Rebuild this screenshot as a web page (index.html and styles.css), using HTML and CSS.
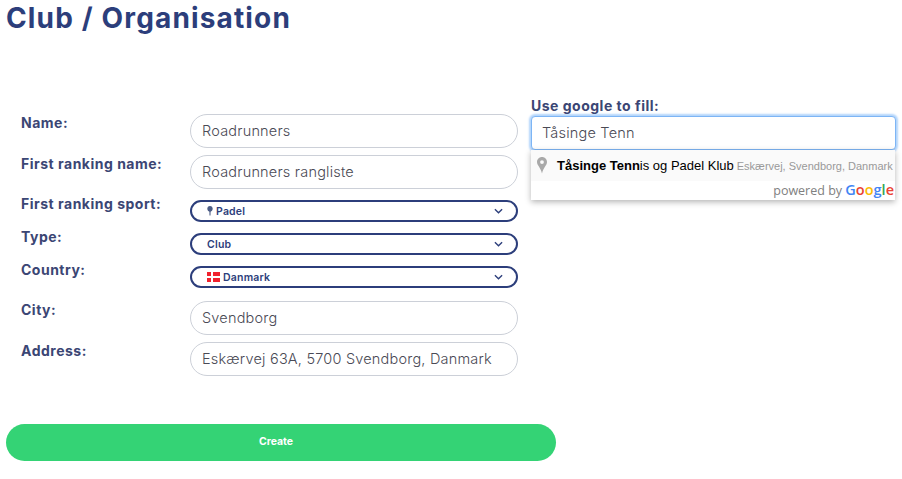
FILE: index.html
```html
<!DOCTYPE html>
<html>
<head>
    <meta charset="utf-8">
    <title>Club / Organisation</title>
    <link rel="stylesheet" href="styles.css">
</head>
<body>
    <h1 class="page-title">Club / Organisation</h1>

    <div class="form-area">
        <div class="fields">
            <div class="field-row">
                <label class="field-label">Name:</label>
                <input class="text-input" type="text" value="Roadrunners">
            </div>
            <div class="field-row first-gap">
                <label class="field-label">First ranking name:</label>
                <input class="text-input" type="text" value="Roadrunners rangliste">
            </div>
            <div class="field-row select-row">
                <label class="field-label">First ranking sport:</label>
                <div class="select-box">
                    <svg class="racket" width="6" height="10" viewBox="0 0 6 10"><path d="M3 0C1.300 0 .3 1.200 .3 2.700 .3 4.200 1.400 5.300 2.400 5.800L2.500 9.500H3.500L3.600 5.800C4.600 5.300 5.700 4.200 5.700 2.700 5.700 1.200 4.700 0 3 0Z" fill="#4b5c85"/></svg>
                    <span>Padel</span>
                    <svg class="chevron" width="9" height="6" viewBox="0 0 10 6"><path d="M1 1L5 5L9 1" fill="none" stroke="#2c3e7b" stroke-width="1.500"/></svg>
                </div>
            </div>
            <div class="field-row select-row">
                <label class="field-label">Type:</label>
                <div class="select-box">
                    <span>Club</span>
                    <svg class="chevron" width="9" height="6" viewBox="0 0 10 6"><path d="M1 1L5 5L9 1" fill="none" stroke="#2c3e7b" stroke-width="1.500"/></svg>
                </div>
            </div>
            <div class="field-row select-row last-select">
                <label class="field-label">Country:</label>
                <div class="select-box">
                    <svg class="flag" width="13" height="10" viewBox="0 0 13 10"><rect width="13" height="10" fill="#f0222e"/><rect x="4" width="2" height="10" fill="#fff"/><rect y="4" width="13" height="2" fill="#fff"/></svg>
                    <span>Danmark</span>
                    <svg class="chevron" width="9" height="6" viewBox="0 0 10 6"><path d="M1 1L5 5L9 1" fill="none" stroke="#2c3e7b" stroke-width="1.500"/></svg>
                </div>
            </div>
            <div class="field-row">
                <label class="field-label">City:</label>
                <input class="text-input" type="text" value="Svendborg">
            </div>
            <div class="field-row">
                <label class="field-label">Address:</label>
                <input class="text-input" type="text" value="Eskærvej 63A, 5700 Svendborg, Danmark">
            </div>
        </div>

        <div class="google-fill">
            <div class="google-label">Use google to fill:</div>
            <input class="google-input" type="text" value="Tåsinge Tenn">
            <div class="suggestions">
                <div class="suggestion">
                    <svg class="pin" width="10" height="17" viewBox="0 0 10 17"><path fill-rule="evenodd" d="M5 0C2.200 0 0 2.200 0 5C0 8.500 3.800 10.500 5 16.500C6.200 10.500 10 8.500 10 5C10 2.200 7.800 0 5 0ZM5 3.200A1.900 1.900 0 1 1 5 7A1.900 1.900 0 0 1 5 3.200Z" fill="#a9a9a9"/></svg>
                    <span class="match">Tåsinge Tenn</span><span class="rest">is og Padel Klub</span>
                    <span class="place">Eskærvej, Svendborg, Danmark</span>
                </div>
                <div class="powered">powered by <span class="google-word"><span class="g-blue">G</span><span class="g-red">o</span><span class="g-yellow">o</span><span class="g-blue">g</span><span class="g-green">l</span><span class="g-red">e</span></span></div>
            </div>
        </div>
    </div>

    <button class="create-btn">Create</button>
</body>
</html>
```

FILE: styles.css
```css
body {
    font-family: Inter, "Open Sans", sans-serif;
    margin: 0;
    padding: 0 6px;
    background-color: #fff;
    color: #2c3e7b;
}

.page-title {
    margin: 0;
    padding-top: 1px;
    padding-bottom: 1px;
    font-size: 28px;
    line-height: 34px;
    font-weight: 700;
    letter-spacing: 1.15px;
    color: #2c3e7b;
}

.form-area {
    display: flex;
    align-items: flex-start;
    margin-top: 62px;
}

.fields {
    width: 512px;
    padding: 16px 0 0 15px;
    box-sizing: border-box;
}

.field-row {
    display: flex;
    margin-bottom: 7px;
}

.first-gap {
    margin-bottom: 11px;
}

.select-row {
    margin-bottom: 11px;
}

.last-select {
    margin-bottom: 13px;
}

.field-label {
    width: 169px;
    flex: none;
    font-size: 14px;
    line-height: 17px;
    font-weight: 700;
    letter-spacing: .5px;
    color: #3b4674;
}

.select-row .field-label {
    margin-top: -5px;
}

.text-input {
    width: 328px;
    height: 34px;
    box-sizing: border-box;
    padding: 0 11px 2px;
    border: 1px solid #ccd0d8;
    border-radius: 17px;
    background: #fff;
    font-family: inherit;
    font-size: 14.500px;
    font-weight: 300;
    letter-spacing: .2px;
    color: #4a4a55;
}

.select-box {
    width: 328px;
    height: 22px;
    box-sizing: border-box;
    display: flex;
    align-items: center;
    gap: 3px;
    padding: 0 13px 0 15px;
    border: 2px solid #2c3e7b;
    border-radius: 11px;
    font-size: 10.500px;
    font-weight: 600;
    letter-spacing: .2px;
    color: #2c3e7b;
}

.chevron {
    margin-left: auto;
}

.google-fill {
    width: 366px;
    margin-left: 13px;
    margin-top: -1px;
}

.google-label {
    font-size: 14px;
    line-height: 17px;
    font-weight: 700;
    letter-spacing: .5px;
    color: #3b4674;
    margin-bottom: 2px;
}

.google-input {
    display: block;
    width: 100%;
    height: 34px;
    box-sizing: border-box;
    padding: 0 10px 1px;
    border: 1px solid #7db5f5;
    border-radius: 4px;
    box-shadow: 0 0 2px 2px #b3d5fb;
    outline: none;
    font-family: inherit;
    font-size: 14.500px;
    font-weight: 300;
    letter-spacing: .2px;
    color: #4a4a55;
}

.suggestions {
    position: relative;
    width: 364px;
    height: 50px;
    background: #fff;
    box-shadow: 0 2px 6px rgba(0,0,0,0.3);
    font-family: "Liberation Sans", Arial, sans-serif;
}

.suggestion {
    display: flex;
    align-items: center;
    height: 31px;
    padding-left: 6px;
    background: #fafafa;
    font-size: 13px;
    white-space: pre;
    color: #000;
}

.pin {
    margin-right: 10px;
}

.match {
    font-weight: 700;
}

.place {
    margin-left: 3px;
    font-size: 11px;
    color: #999;
}

.powered {
    height: 19px;
    line-height: 18px;
    padding-right: 1px;
    text-align: right;
    font-family: "Open Sans", sans-serif;
    font-size: 12.500px;
    color: #808080;
}

.google-word {
    font-size: 14.500px;
    font-weight: 600;
}

.g-blue { color: #4285f4; }
.g-red { color: #ea4335; }
.g-yellow { color: #fbbc05; }
.g-green { color: #34a853; }

.create-btn {
    display: block;
    width: 550px;
    height: 37px;
    margin-top: 41px;
    padding: 0 10px 2px 0;
    border: none;
    border-radius: 19px;
    background: #34d375;
    font-family: inherit;
    font-size: 10.500px;
    font-weight: 700;
    color: #fff;
}
```
